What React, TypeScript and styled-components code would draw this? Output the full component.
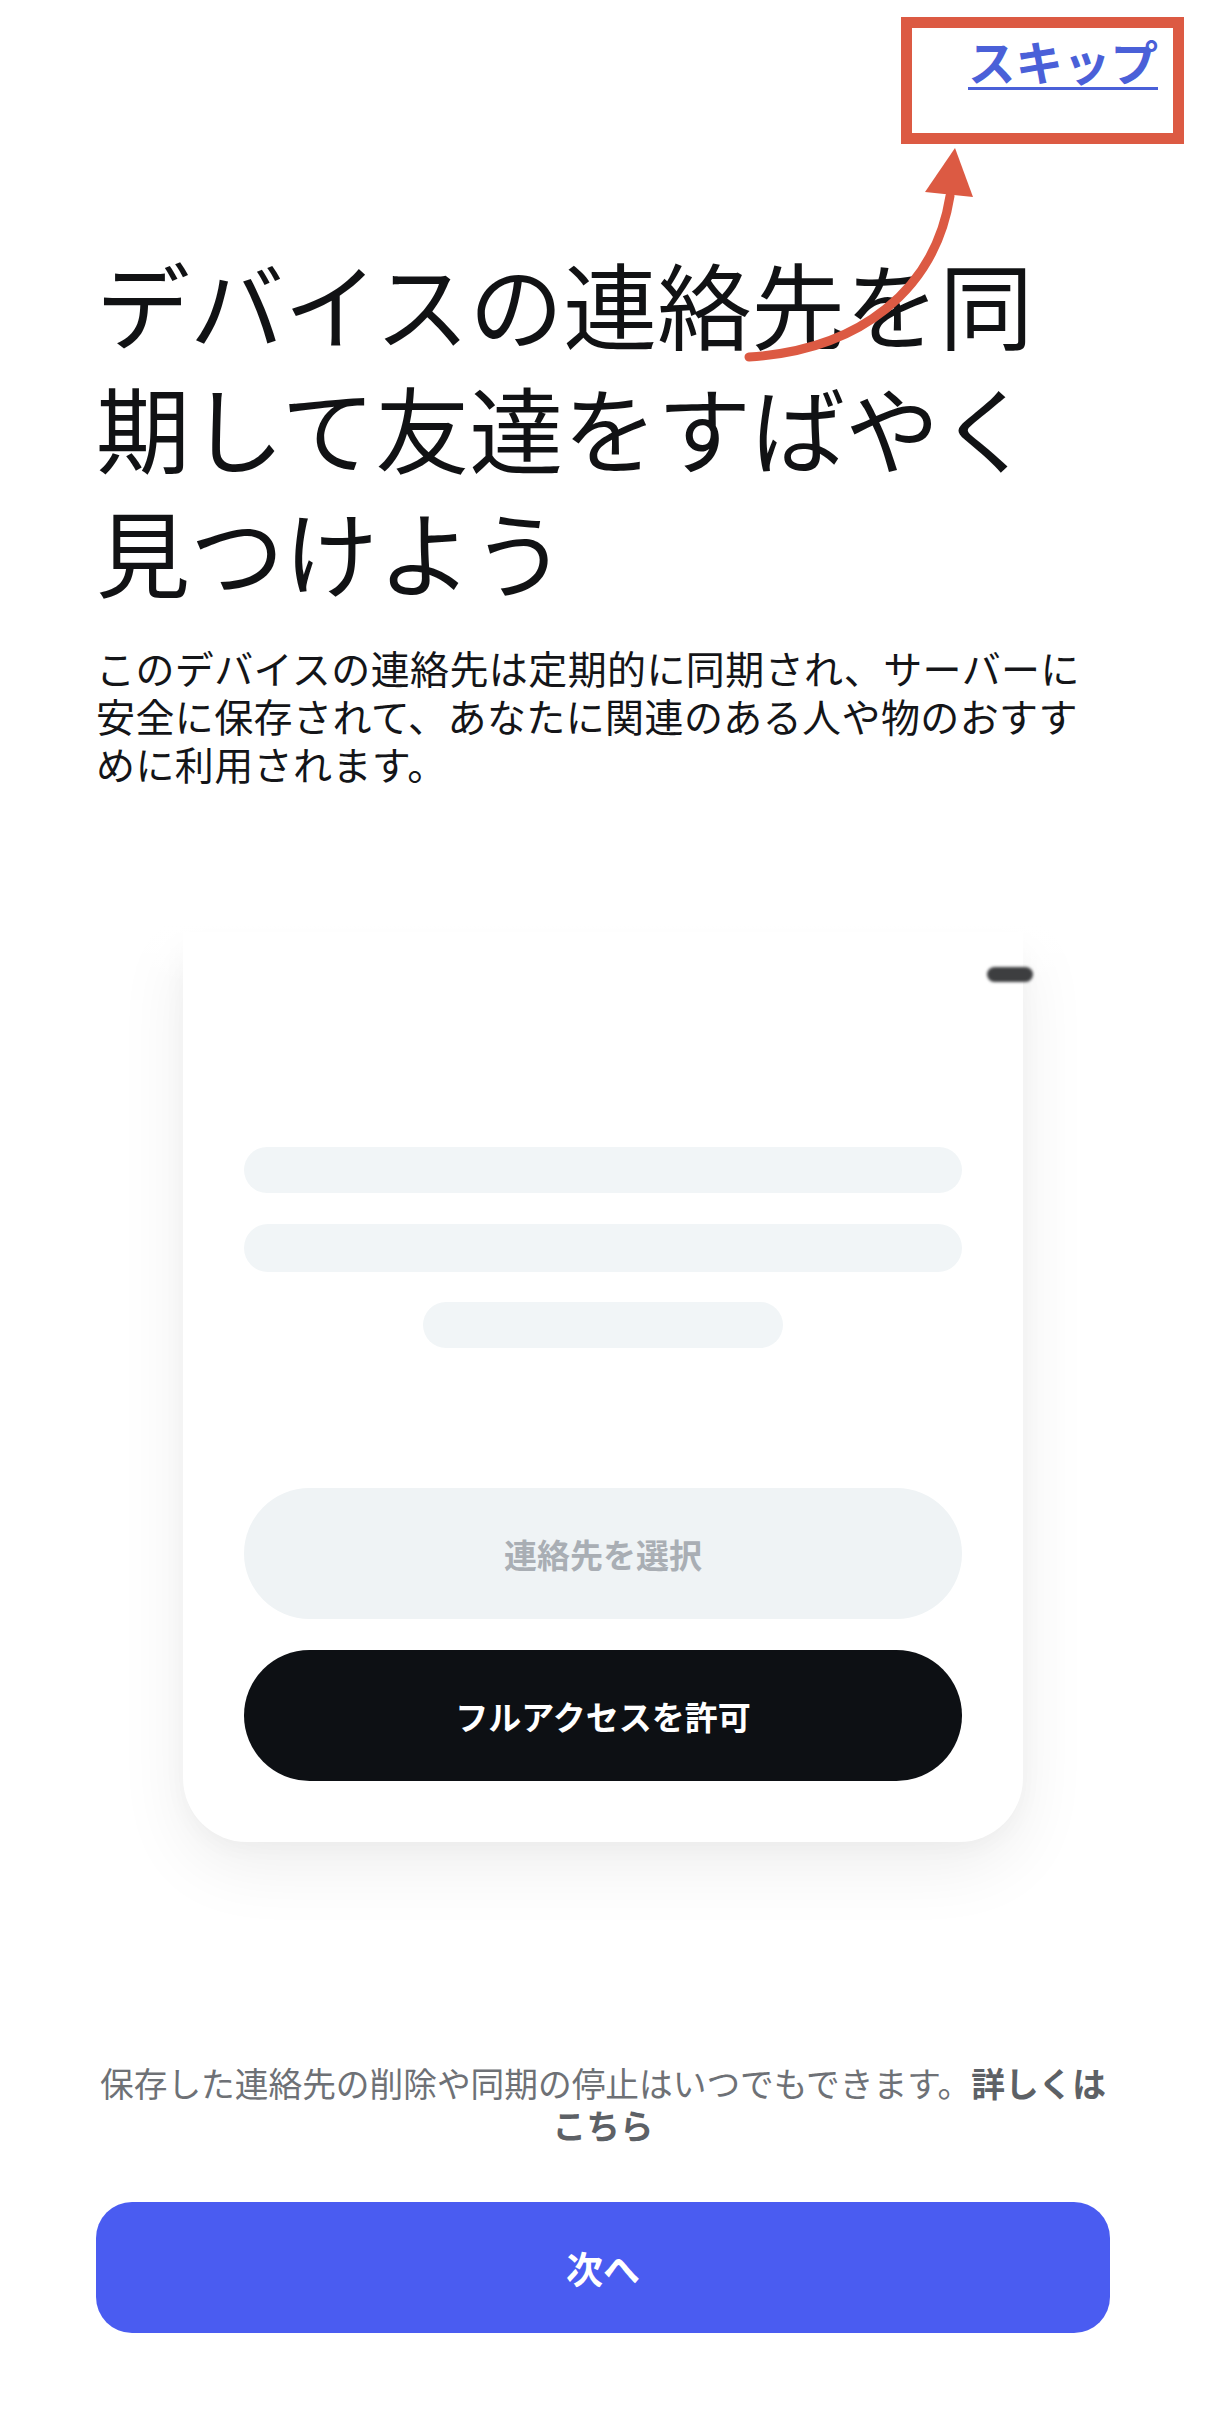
import React from "react";
import styled, { createGlobalStyle } from "styled-components";

const GlobalStyle = createGlobalStyle`
  html, body {
    margin: 0;
    padding: 0;
    background: #ffffff;
  }
  body {
    font-family: "Noto Sans CJK JP", "Noto Sans", "Liberation Sans", sans-serif;
    color: #111214;
    -webkit-font-smoothing: antialiased;
  }
`;

const Page = styled.div`
  position: relative;
  width: 1206px;
  min-height: 2436px;
  display: flex;
  flex-direction: column;
  box-sizing: border-box;
  padding-bottom: 103px;
  overflow: hidden;
`;

const TopBar = styled.div`
  display: flex;
  justify-content: flex-end;
  padding: 32px 48px 0;
`;

const SkipLink = styled.a`
  font-size: 47.5px;
  line-height: 57px;
  font-weight: 700;
  color: #4a60d8;
  text-decoration: underline;
  text-decoration-thickness: 3px;
  text-underline-offset: 6px;
  cursor: pointer;
`;

const Section = styled.div`
  padding: 0 96px;
`;

const Title = styled.h1`
  margin: 151px 0 0;
  font-size: 94px;
  line-height: 124px;
  font-weight: 400;
  color: #111214;
`;

const Lead = styled.p`
  margin: 31px 0 0;
  font-size: 39px;
  line-height: 48px;
  letter-spacing: 0.4px;
  color: #141518;
`;

const CardWrap = styled.div`
  position: relative;
  align-self: center;
  margin-top: 145px;
  width: 840px;

  /* the mock phone fades out at its top edge */
  &::after {
    content: "";
    position: absolute;
    left: -160px;
    right: -160px;
    top: -80px;
    height: 130px;
    background: linear-gradient(to bottom, #ffffff 55%, rgba(255, 255, 255, 0));
    pointer-events: none;
  }
`;

const Card = styled.div`
  position: relative;
  height: 910px;
  box-sizing: border-box;
  padding: 215px 61px 61px;
  display: flex;
  flex-direction: column;
  background: #ffffff;
  border-radius: 0 0 64px 64px;
  box-shadow: 0 24px 70px rgba(0, 0, 0, 0.07), 0 4px 24px rgba(0, 0, 0, 0.03);
`;

const StatusPill = styled.span`
  position: absolute;
  top: 35px;
  right: -10px;
  width: 46px;
  height: 15px;
  border-radius: 8px;
  background: #3d3e40;
  filter: blur(1.4px);
  z-index: 2;
`;

const SkeletonBar = styled.div<{ $width?: number; $height: number; $gap: number }>`
  align-self: center;
  width: ${(p) => (p.$width ? `${p.$width}px` : "100%")};
  height: ${(p) => p.$height}px;
  margin-top: ${(p) => p.$gap}px;
  border-radius: 999px;
  background: #f1f5f7;
`;

const PillButton = styled.button<{ $dark?: boolean; $gap: number }>`
  display: flex;
  align-items: center;
  justify-content: center;
  width: 100%;
  height: 131px;
  margin-top: ${(p) => p.$gap}px;
  border: none;
  border-radius: 999px;
  font-family: inherit;
  font-size: 33px;
  font-weight: 700;
  background: ${(p) => (p.$dark ? "#0d1014" : "#eff3f5")};
  color: ${(p) => (p.$dark ? "#ffffff" : "#a9aeb4")};
`;

const Note = styled.p`
  margin: 220px 0 0;
  font-size: 33.7px;
  line-height: 42px;
  text-align: center;
  color: #6e7176;

  & > strong {
    font-weight: 700;
    color: #5d6166;
  }
`;

const NextButton = styled.button`
  display: flex;
  align-items: center;
  justify-content: center;
  width: 100%;
  height: 131px;
  margin-top: 56px;
  border: none;
  border-radius: 36px;
  background: #4a5cf1;
  color: #ffffff;
  font-family: inherit;
  font-size: 37px;
  font-weight: 700;
`;

const Annotation = styled.svg`
  position: absolute;
  left: 0;
  top: 0;
  width: 1206px;
  height: 400px;
  pointer-events: none;
  z-index: 5;
`;

export default function App() {
  return (
    <>
      <GlobalStyle />
      <Page>
        <TopBar>
          <SkipLink>スキップ</SkipLink>
        </TopBar>

        <Section>
          <Title>デバイスの連絡先を同期して友達をすばやく見つけよう</Title>
          <Lead>
            このデバイスの連絡先は定期的に同期され、サーバーに安全に保存されて、あなたに関連のある人や物のおすすめに利用されます。
          </Lead>
        </Section>

        <CardWrap>
          <Card>
            <StatusPill />
            <SkeletonBar $height={46} $gap={0} />
            <SkeletonBar $height={48} $gap={31} />
            <SkeletonBar $width={360} $height={46} $gap={30} />
            <PillButton $gap={140}>連絡先を選択</PillButton>
            <PillButton $dark $gap={31}>フルアクセスを許可</PillButton>
          </Card>
        </CardWrap>

        <Section>
          <Note>
            保存した連絡先の削除や同期の停止はいつでもできます。<strong>詳しくはこちら</strong>
          </Note>
          <NextButton>次へ</NextButton>
        </Section>

        <Annotation viewBox="0 0 1206 400">
          <rect x="906.5" y="22.5" width="272" height="116" fill="none" stroke="#dc5a43" strokeWidth="11" />
          <path d="M749 357 C860 350 935 290 950 196" fill="none" stroke="#dc5a43" strokeWidth="9" strokeLinecap="round" />
          <polygon points="925,192 973,197 955,148" fill="#dc5a43" />
        </Annotation>
      </Page>
    </>
  );
}
